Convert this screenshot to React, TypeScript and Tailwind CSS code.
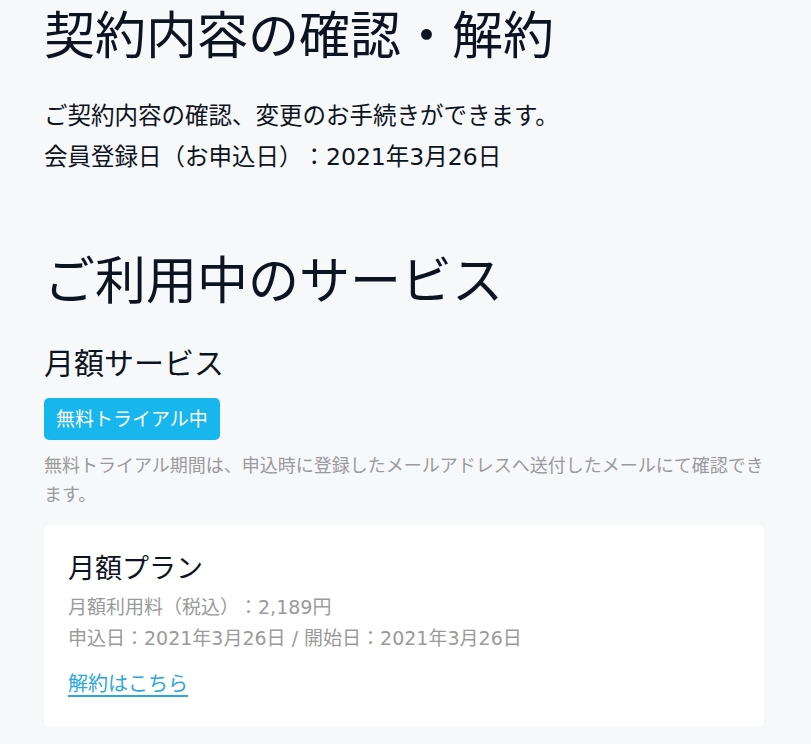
import React from "react";

export default function App() {
  return (
    <div
      className="min-h-[744px] w-full bg-[#f7f8fa] text-[#0d1421] [text-spacing-trim:space-all]"
      style={{ fontFamily: '"DejaVu Sans", "Noto Sans CJK JP", sans-serif' }}
    >
      <div className="pl-[44px] pr-[47px] pt-[6px] pb-[18px]">
        <h1 className="text-[51px] leading-[62px] font-normal m-0 whitespace-nowrap">契約内容の確認・解約</h1>
        <p className="mt-[28px] text-[23.5px] leading-[41px]">ご契約内容の確認、変更のお手続きができます。</p>
        <p className="text-[23.5px] leading-[41px]">会員登録日（お申込日）：2021年3月26日</p>
        <h2 className="mt-[73px] text-[51px] leading-[62px] font-normal">ご利用中のサービス</h2>
        <h3 className="mt-[31px] text-[30px] leading-[40px] font-normal">月額サービス</h3>
        <div className="mt-[14px] flex w-fit items-center h-[42px] px-[12px] rounded-[5px] bg-[#17b6ec] text-white text-[19px]">
          無料トライアル中
        </div>
        <p className="mt-[11px] text-[18px] leading-[29px] text-[#9a9a9a]">
          無料トライアル期間は、申込時に登録したメールアドレスへ送付したメールにて確認できます。
        </p>
        <div className="mt-[16px] bg-white rounded-[5px] px-[24px] pt-[25px] pb-[28px]">
          <h4 className="text-[27px] leading-[38px] font-normal">月額プラン</h4>
          <p className="mt-[4px] text-[19px] leading-[31px] text-[#9a9a9a]">月額利用料（税込）：2,189円</p>
          <p className="text-[19px] leading-[31px] text-[#9a9a9a]">申込日：2021年3月26日 / 開始日：2021年3月26日</p>
          <a href="#" className="mt-[15px] inline-block text-[20px] leading-[30px] text-[#2aa7df] underline decoration-2 underline-offset-[4px]">
            解約はこちら
          </a>
        </div>
      </div>
    </div>
  );
}
